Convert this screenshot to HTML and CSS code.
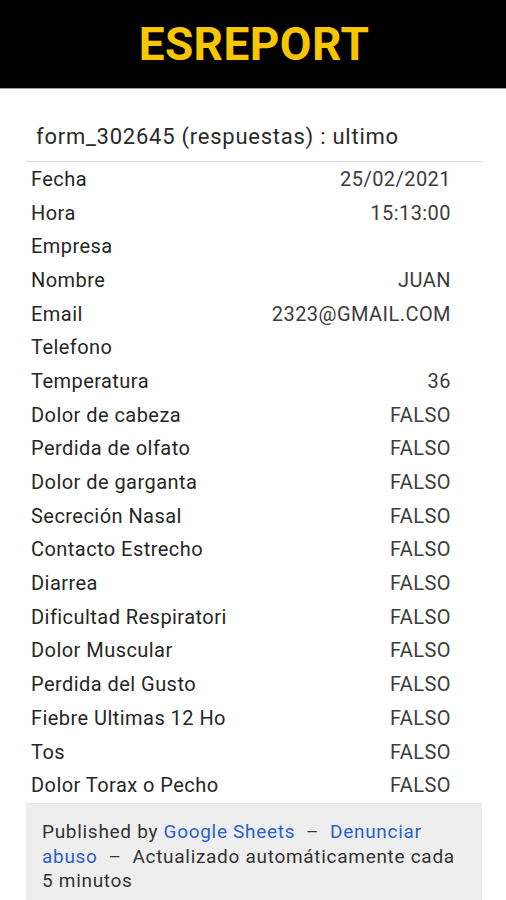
FILE: index.html
```html
<!DOCTYPE html>
<html lang="es">
<head>
    <meta charset="UTF-8">
    <meta name="viewport" content="width=device-width, initial-scale=1.0">
    <title>ESREPORT</title>
    <link rel="stylesheet" href="styles.css">
</head>
<body>
    <div class="top-bar">
        <h1>ESREPORT</h1>
    </div>

    <div class="sheet">
        <div class="sheet-title">form_302645 (respuestas) : ultimo</div>

        <table class="data">
            <tr><td>Fecha</td><td class="val">25/02/2021</td></tr>
            <tr><td>Hora</td><td class="val">15:13:00</td></tr>
            <tr><td>Empresa</td><td class="val"></td></tr>
            <tr><td>Nombre</td><td class="val">JUAN</td></tr>
            <tr><td>Email</td><td class="val">2323@GMAIL.COM</td></tr>
            <tr><td>Telefono</td><td class="val"></td></tr>
            <tr><td>Temperatura</td><td class="val">36</td></tr>
            <tr><td>Dolor de cabeza</td><td class="val">FALSO</td></tr>
            <tr><td>Perdida de olfato</td><td class="val">FALSO</td></tr>
            <tr><td>Dolor de garganta</td><td class="val">FALSO</td></tr>
            <tr><td>Secreción Nasal</td><td class="val">FALSO</td></tr>
            <tr><td>Contacto Estrecho</td><td class="val">FALSO</td></tr>
            <tr><td>Diarrea</td><td class="val">FALSO</td></tr>
            <tr><td>Dificultad Respiratori</td><td class="val">FALSO</td></tr>
            <tr><td>Dolor Muscular</td><td class="val">FALSO</td></tr>
            <tr><td>Perdida del Gusto</td><td class="val">FALSO</td></tr>
            <tr><td>Fiebre Ultimas 12 Ho</td><td class="val">FALSO</td></tr>
            <tr><td>Tos</td><td class="val">FALSO</td></tr>
            <tr><td>Dolor Torax o Pecho</td><td class="val">FALSO</td></tr>
        </table>

        <div class="footer">
            Published by <a href="#">Google Sheets</a>&nbsp; &ndash;&nbsp; <a href="#">Denunciar abuso</a>&nbsp; &ndash;&nbsp; Actualizado automáticamente cada 5 minutos
        </div>
    </div>
</body>
</html>
```

FILE: styles.css
```css
body {
    margin: 0;
    font-family: Roboto, "Liberation Sans", sans-serif;
    background-color: #fff;
    color: #222;
}
.top-bar {
    height: 88px;
    background-color: #000;
    border-bottom: 1px solid #9a9a9a;
    display: flex;
    justify-content: center;
    align-items: center;
}
.top-bar h1 {
    margin: 0 0 0 2px;
    color: #f7c600;
    font-size: 46px;
    font-weight: bold;
    letter-spacing: 0.4px;
}
.sheet {
    margin: 0 24px 0 26px;
}
.sheet-title {
    font-size: 22px;
    letter-spacing: 0.75px;
    color: #2a2a2a;
    padding: 35px 10px 0 10px;
    height: 37px;
    border-bottom: 1px solid #dadada;
}
.data {
    width: 100%;
    border-collapse: collapse;
    font-size: 20px;
    letter-spacing: 0.45px;
    color: #262626;
}
.data td {
    height: 33.7px;
    padding: 0 5px;
    vertical-align: middle;
    white-space: nowrap;
}
.data .val {
    text-align: right;
    padding-right: 31px;
    color: #3c3c3c;
}
.footer {
    margin-top: 1px;
    border-top: 1px solid #e3e3e3;
    background-color: #eeeeee;
    padding: 16px 20px 20px 16px;
    font-size: 19px;
    letter-spacing: 0.7px;
    line-height: 24.5px;
    color: #333;
}
.footer a {
    color: #2a5fcf;
    text-decoration: none;
}
```
